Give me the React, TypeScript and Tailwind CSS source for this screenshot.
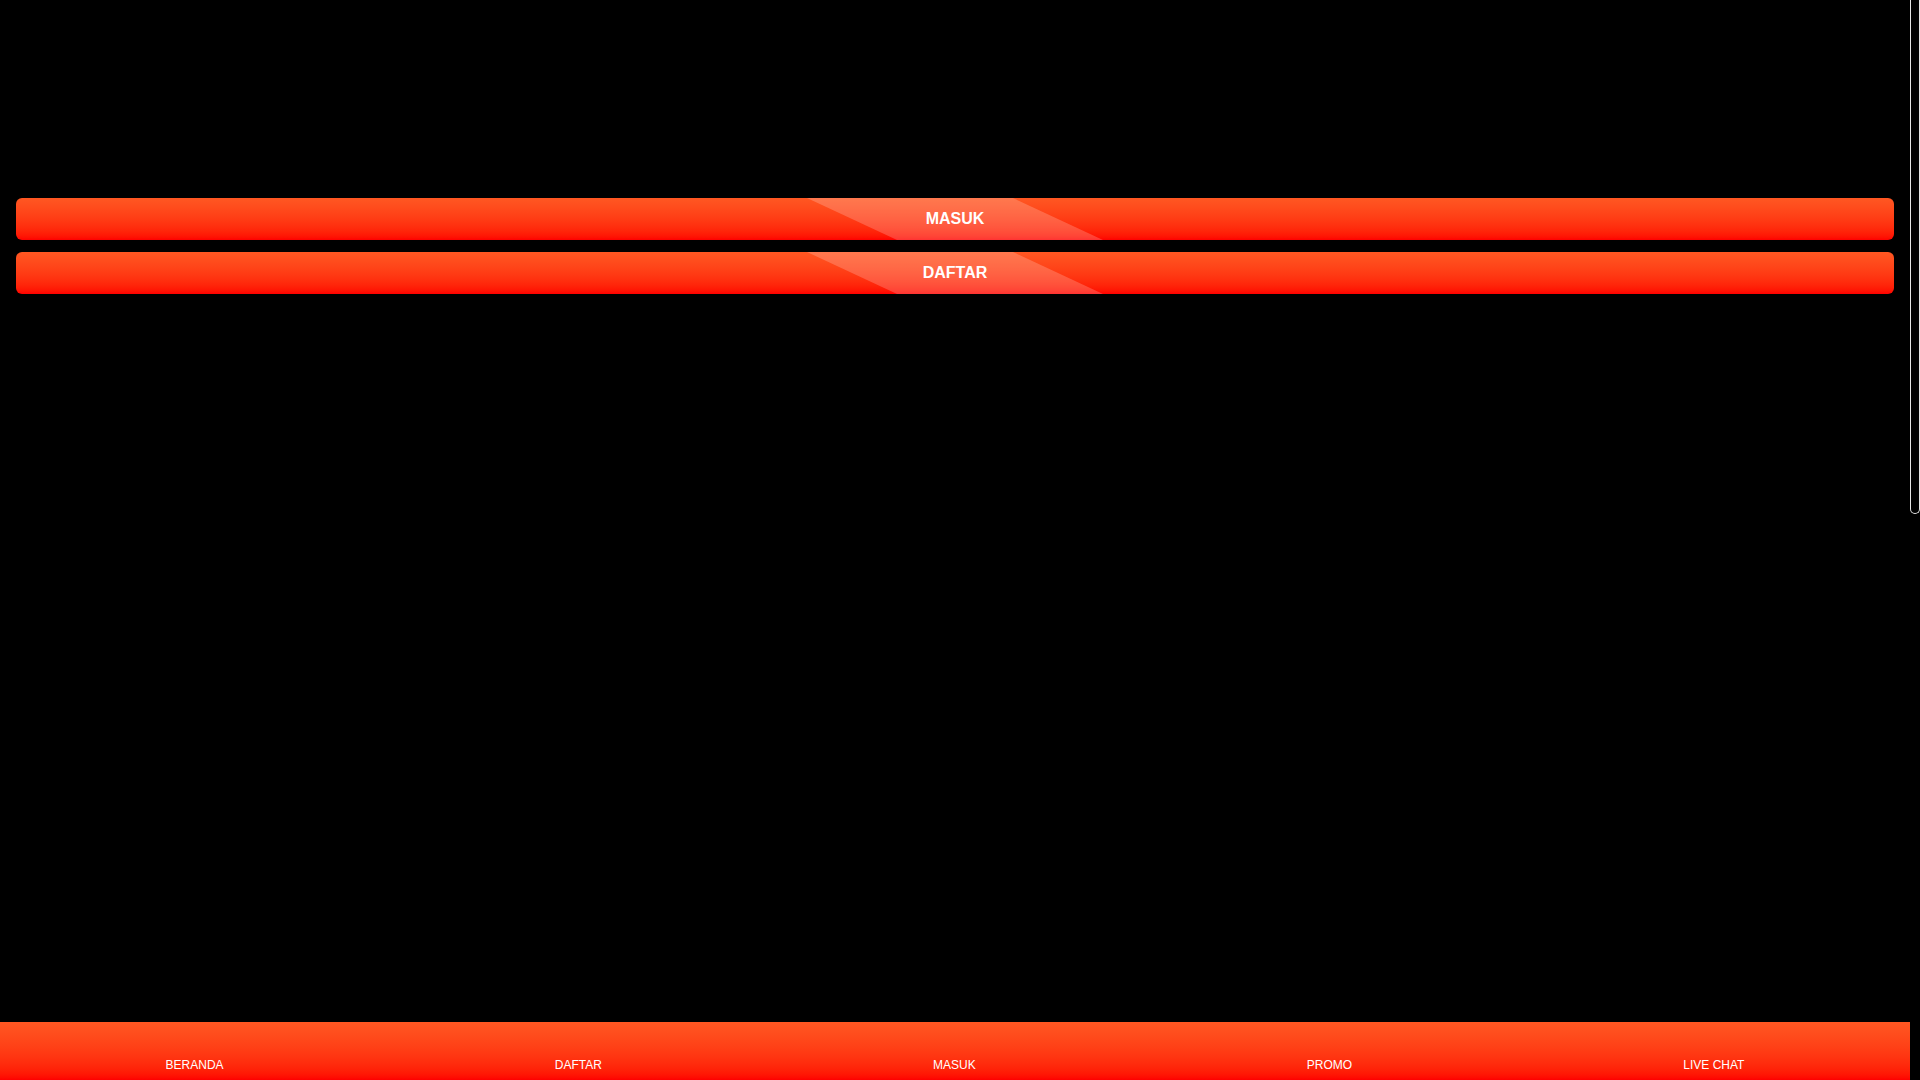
import React from "react";

const navItems = ["BERANDA", "DAFTAR", "MASUK", "PROMO", "LIVE CHAT"];

function ActionButton({label}: {label: string}) {
    return (
        <button
            className="relative w-full h-[42px] rounded-[6px] overflow-hidden bg-gradient-to-b from-[#ff5722] to-[#ff0000] flex items-center justify-center cursor-pointer">
            {/* diagonal shine band */}
            <span className="absolute top-0 left-1/2 -ml-[103px] w-[206px] h-full bg-white/20 skew-x-[65deg]"/>
            <span className="relative text-white font-bold text-[16px] leading-none">{label}</span>
        </button>
    );
}

export default function App() {
    return (
        <div className="h-screen flex bg-black overflow-hidden [font-family:'Liberation_Sans',Arial,sans-serif]">
            <main className="flex-1 overflow-y-auto [scrollbar-width:none]">
                <div className="min-h-[2270px] flex flex-col">
                    {/* header / logo area */}
                    <div className="h-[198px]"/>

                    <div className="px-4 flex flex-col gap-3">
                        <ActionButton label="MASUK"/>
                        <ActionButton label="DAFTAR"/>
                    </div>

                    <div className="flex-1"/>
                </div>
            </main>

            {/* scrollbar */}
            <div className="w-[10px] bg-black flex flex-col">
                <div className="h-[514px] rounded-b-[5px] border border-t-0 border-[#e5e5e5] bg-black"/>
            </div>

            {/* bottom navigation */}
            <nav
                className="fixed bottom-0 left-0 right-[10px] h-[58px] bg-gradient-to-b from-[#ff5722] to-[#ff0000] flex justify-around">
                {navItems.map((item) => (
                    <a key={item} href="#"
                       className="flex flex-col items-center justify-end pb-[8px] text-white text-[12px] leading-[14px]">
                        {item}
                    </a>
                ))}
            </nav>
        </div>
    );
}
